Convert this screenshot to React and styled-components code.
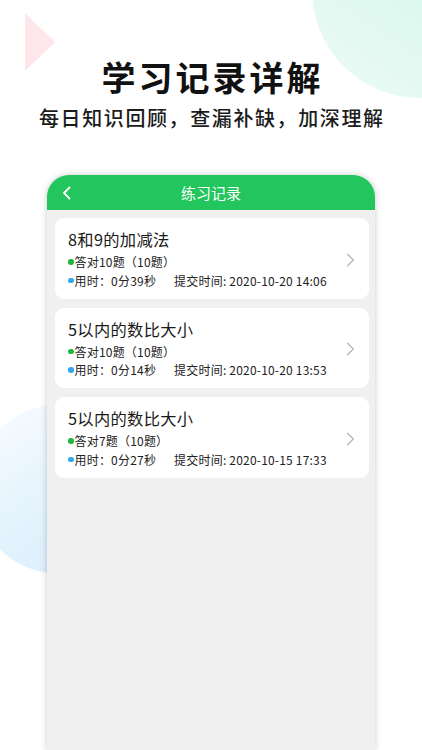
import React from "react";
import styled, { createGlobalStyle } from "styled-components";

const Global = createGlobalStyle`
  html, body { margin: 0; padding: 0; background: #fff; }
  body { font-family: "Noto Sans CJK SC", "Noto Sans", sans-serif; }
`;

const Page = styled.div`
  position: relative;
  width: 422px;
  height: 750px;
  overflow: hidden;
  background: #fff;
  display: flex;
  flex-direction: column;
  align-items: center;
`;

const Triangle = styled.div`
  position: absolute;
  left: 25px;
  top: 13px;
  width: 0;
  height: 0;
  border-top: 29px solid transparent;
  border-bottom: 29px solid transparent;
  border-left: 30px solid #fde7ea;
`;

const Blob = styled.div`
  position: absolute;
  border-radius: 50%;
  left: ${(p) => p.$x}px;
  top: ${(p) => p.$y}px;
  width: ${(p) => p.$r * 2}px;
  height: ${(p) => p.$r * 2}px;
  background: ${(p) => p.$bg};
`;

const Title = styled.h1`
  position: relative;
  margin: 55px 0 0;
  font-size: 34px;
  line-height: 44px;
  font-weight: 700;
  letter-spacing: 3px;
  padding-left: 3px;
  color: #111;
`;

const Subtitle = styled.p`
  position: relative;
  margin: 5px 0 0;
  font-size: 20px;
  line-height: 28px;
  font-weight: 500;
  letter-spacing: 1.6px;
  padding-left: 1.6px;
  color: #1c1c1c;
`;

const Panel = styled.div`
  position: relative;
  margin-top: 43px;
  width: 328px;
  flex: 1;
  background: #f0f0f0;
  border-radius: 22px 22px 0 0;
  box-shadow: 0 0 6px rgba(0, 0, 0, 0.22);
  display: flex;
  flex-direction: column;
  overflow: hidden;
`;

const Header = styled.div`
  height: 35px;
  background: #22c65d;
  display: grid;
  grid-template-columns: 40px 1fr 40px;
  align-items: center;
  color: #fff;
`;

const HeaderTitle = styled.div`
  text-align: center;
  font-size: 15px;
  line-height: 20px;
  font-weight: 400;
  padding-top: 1px;
`;

const BackBtn = styled.div`
  display: flex;
  align-items: center;
  padding-left: 15px;
  padding-top: 1px;
`;

const List = styled.div`
  display: flex;
  flex-direction: column;
  gap: 9px;
  padding: 8px 6px 0 8px;
`;

const Card = styled.div`
  background: #fff;
  border-radius: 9px;
  padding: 10px 12px 9px 13px;
  display: flex;
  align-items: center;
`;

const CardBody = styled.div`
  flex: 1;
`;

const CardTitle = styled.div`
  font-size: 16.3px;
  line-height: 22px;
  color: #1a1a1a;
  letter-spacing: 0.3px;
`;

const InfoRow = styled.div`
  display: flex;
  align-items: center;
  font-size: 12px;
  line-height: 18px;
  color: #222;
  letter-spacing: 0.2px;
  margin-top: ${(p) => p.$mt || 0}px;
`;

const Dot = styled.span`
  width: 5.5px;
  height: 5.5px;
  border-radius: 50%;
  background: ${(p) => p.$color};
  margin-right: 1px;
  flex: none;
`;

const Submit = styled.span`
  margin-left: 18px;
`;

const Chevron = styled.div`
  display: flex;
  align-items: center;
  padding-right: 2px;
  margin-top: 2px;
`;

const records = [
  { title: "8和9的加减法", right: 10, time: "0分39秒", at: "2020-10-20 14:06" },
  { title: "5以内的数比大小", right: 10, time: "0分14秒", at: "2020-10-20 13:53" },
  { title: "5以内的数比大小", right: 7, time: "0分27秒", at: "2020-10-15 17:33" },
];

export default function App() {
  return (
    <>
      <Global />
      <Page>
        <Triangle />
        <Blob
          $x={312}
          $y={-118}
          $r={108}
          $bg="linear-gradient(215deg, #c9f3e4 0%, #dcf8ee 55%, #eefbf7 100%)"
        />
        <Blob
          $x={-25}
          $y={404}
          $r={85}
          $bg="linear-gradient(145deg, #fbfdff 0%, #e6f4fd 45%, #d4ecfb 100%)"
        />
        <Title>学习记录详解</Title>
        <Subtitle>每日知识回顾，查漏补缺，加深理解</Subtitle>
        <Panel>
          <Header>
            <BackBtn>
              <svg width="9" height="14" viewBox="0 0 9 14">
                <path d="M7.5 1.5 L2 7 L7.5 12.5" fill="none" stroke="#fff" strokeWidth="1.8" strokeLinecap="round" strokeLinejoin="round" />
              </svg>
            </BackBtn>
            <HeaderTitle>练习记录</HeaderTitle>
            <div />
          </Header>
          <List>
            {records.map((r, i) => (
              <Card key={i}>
                <CardBody>
                  <CardTitle>{r.title}</CardTitle>
                  <InfoRow $mt={3}>
                    <Dot $color="#1fb73a" />
                    答对{r.right}题（10题）
                  </InfoRow>
                  <InfoRow $mt={0.5}>
                    <Dot $color="#2ea7f2" />
                    用时：{r.time}
                    <Submit>提交时间: {r.at}</Submit>
                  </InfoRow>
                </CardBody>
                <Chevron>
                  <svg width="9" height="14" viewBox="0 0 9 14">
                    <path d="M1.5 1.2 L7.3 7 L1.5 12.8" fill="none" stroke="#b8b8b8" strokeWidth="1.4" strokeLinecap="round" strokeLinejoin="round" />
                  </svg>
                </Chevron>
              </Card>
            ))}
          </List>
        </Panel>
      </Page>
    </>
  );
}
